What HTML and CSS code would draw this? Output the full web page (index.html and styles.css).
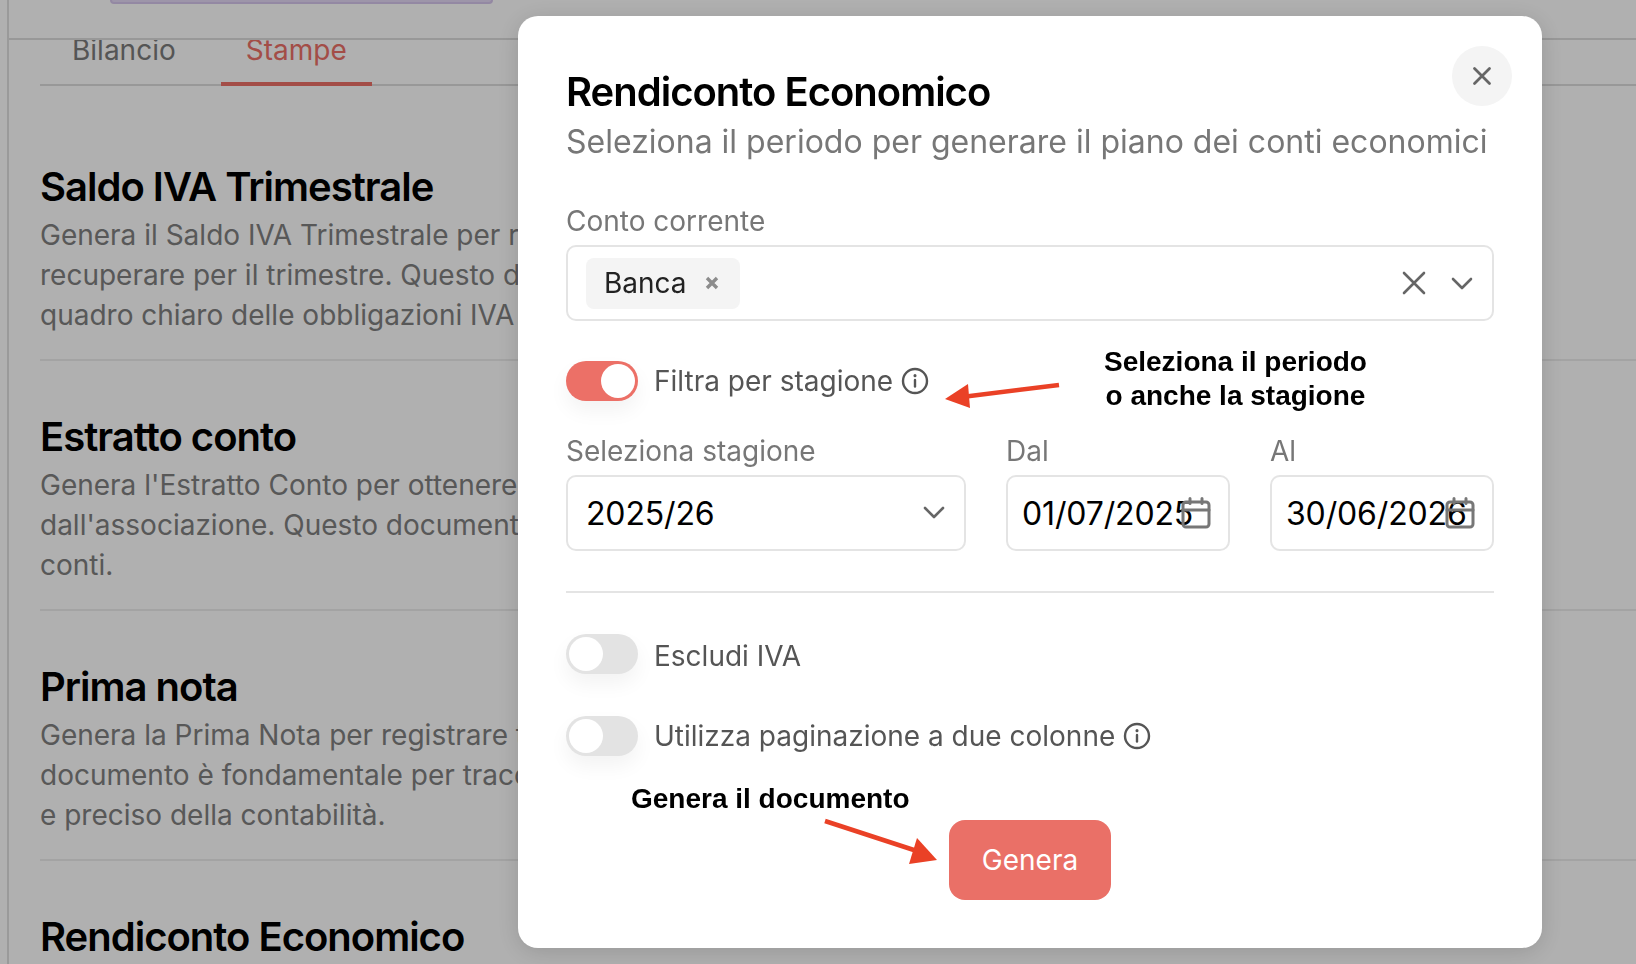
FILE: index.html
```html
<!DOCTYPE html>
<html lang="it">
<head>
    <meta charset="UTF-8">
    <title>Stampe</title>
    <link rel="stylesheet" href="styles.css">
</head>
<body>
<div class="page">
    <div class="topbar">
        <div class="pill"></div>
    </div>
    <div class="content">
        <div class="tabs">
            <div class="tab">Bilancio</div>
            <div class="tab active">Stampe</div>
        </div>
        <div class="item">
            <h2>Saldo IVA Trimestrale</h2>
            <p>Genera il Saldo IVA Trimestrale per riepilogare<br>recuperare per il trimestre. Questo di<br>quadro chiaro delle obbligazioni IVA</p>
        </div>
        <div class="item">
            <h2>Estratto conto</h2>
            <p>Genera l'Estratto Conto per ottenere i<br>dall'associazione. Questo documento<br>conti.</p>
        </div>
        <div class="item">
            <h2>Prima nota</h2>
            <p>Genera la Prima Nota per registrare tutte<br>documento è fondamentale per tracciare<br>e preciso della contabilità.</p>
        </div>
        <div class="item">
            <h2>Rendiconto Economico</h2>
        </div>
    </div>
</div>

<div class="overlay"></div>

<div class="modal">
    <div class="close">
        <svg width="20" height="20" viewBox="0 0 20 20" fill="none" stroke="#666" stroke-width="2.8" stroke-linecap="round"><path d="M2.5 2.5l15 15M17.5 2.5l-15 15"/></svg>
    </div>
    <h1>Rendiconto Economico</h1>
    <div class="subtitle">Seleziona il periodo per generare il piano dei conti economici</div>

    <label class="field-label first">Conto corrente</label>
    <div class="box multi">
        <div class="chip">
            <span>Banca</span>
            <svg width="14" height="14" viewBox="0 0 14 14" fill="none" stroke="#8c8c8c" stroke-width="3.4"><path d="M2 2l10 10M12 2L2 12"/></svg>
        </div>
        <div class="box-icons">
            <svg width="24" height="24" viewBox="0 0 24 24" fill="none" stroke="#666" stroke-width="2.6" stroke-linecap="round"><path d="M2 2l20 20M22 2L2 22"/></svg>
            <svg width="22" height="14" viewBox="0 0 22 14" fill="none" stroke="#666" stroke-width="2.6" stroke-linecap="round" stroke-linejoin="round"><path d="M2 3l9 9 9-9"/></svg>
        </div>
    </div>

    <div class="switch-row season">
        <div class="switch on"><span></span></div>
        <span class="switch-label">Filtra per stagione</span>
        <svg class="info" width="28" height="28" viewBox="0 0 28 28" fill="none" stroke="#555" stroke-width="2.4" stroke-linecap="round"><circle cx="14" cy="14" r="12"/><path d="M14 13v6.5"/><path d="M14 8.6v.2" stroke-width="3"/></svg>
    </div>

    <div class="dates">
        <div>
            <label class="field-label">Seleziona stagione</label>
            <div class="box value">
                <span>2025/26</span>
                <svg class="chevron" width="22" height="14" viewBox="0 0 22 14" fill="none" stroke="#666" stroke-width="2.6" stroke-linecap="round" stroke-linejoin="round"><path d="M2 3l9 9 9-9"/></svg>
            </div>
        </div>
        <div>
            <label class="field-label">Dal</label>
            <div class="box value date">
                <span>01/07/2025</span>
                <svg class="calendar" width="30" height="32" viewBox="0 0 30 32" fill="none" stroke="#777" stroke-width="3" stroke-linejoin="round" stroke-linecap="round"><rect x="2" y="5" width="26" height="25" rx="3"/><path d="M2 13h26M9 1.5v5M21 1.5v5"/></svg>
            </div>
        </div>
        <div>
            <label class="field-label">Al</label>
            <div class="box value date">
                <span>30/06/2026</span>
                <svg class="calendar" width="30" height="32" viewBox="0 0 30 32" fill="none" stroke="#777" stroke-width="3" stroke-linejoin="round" stroke-linecap="round"><rect x="2" y="5" width="26" height="25" rx="3"/><path d="M2 13h26M9 1.5v5M21 1.5v5"/></svg>
            </div>
        </div>
    </div>

    <div class="divider"></div>

    <div class="switch-row exclude">
        <div class="switch"><span></span></div>
        <span class="switch-label">Escludi IVA</span>
    </div>
    <div class="switch-row second">
        <div class="switch"><span></span></div>
        <span class="switch-label">Utilizza paginazione a due colonne</span>
        <svg class="info" width="28" height="28" viewBox="0 0 28 28" fill="none" stroke="#555" stroke-width="2.4" stroke-linecap="round"><circle cx="14" cy="14" r="12"/><path d="M14 13v6.5"/><path d="M14 8.6v.2" stroke-width="3"/></svg>
    </div>

    <div class="actions">
        <div class="btn">Genera</div>
    </div>
</div>

<!-- annotazioni sopra lo screenshot -->
<div class="note note-period">Seleziona il periodo<br>o anche la stagione</div>
<div class="note note-doc">Genera il documento</div>
<svg class="arrows" width="1636" height="964" viewBox="0 0 1636 964">
    <path d="M1059 385L962 397" stroke="#ea4126" stroke-width="4.5" fill="none"/>
    <path d="M945 399L968 384L970 408Z" fill="#ea4126"/>
    <path d="M825 821L920 852" stroke="#ea4126" stroke-width="4.5" fill="none"/>
    <path d="M937 860L917 838L909 864Z" fill="#ea4126"/>
</svg>
</body>
</html>
```

FILE: styles.css
```css
*{margin: 0;padding: 0;box-sizing: border-box;}

html,body{
    height: 100%;
    overflow: hidden;
}
body{
    background: #fff;
    font-family: Inter, "Noto Sans", sans-serif;
}

.page{
    position: relative;
    z-index: 0;
    height: 964px;
    margin-left: 7px;
    border-left: 2px solid #e0e0e0;
    overflow: hidden;
}
.topbar{
    position: relative;
    z-index: 1;
    height: 40px;
    background: #fff;
    border-bottom: 2px solid #dcdcdc;
    padding-left: 101px;
}
.pill{
    width: 383px;
    height: 4px;
    background: #e4d8f5;
    border: 2px solid #d6c6ec;
    border-top: 0;
    border-radius: 0 0 14px 14px;
}
.content{
    padding-left: 31px;
}
.tabs{
    display: flex;
    height: 46px;
    border-bottom: 2px solid #dcdcdc;
    padding-left: 32px;
    gap: 70px;
}
.tab{
    font-size: 28px;
    line-height: 38px;
    margin-top: -9px;
    height: 55px;
    color: #7b7b7b;
}
.tab.active{
    color: #ec7067;
    border-bottom: 4px solid #ec7067;
    padding: 0 25px;
    margin-left: -25px;
    margin-right: -25px;
}

.item{
    height: 250px;
    padding-top: 51px;
    border-bottom: 2px solid #ececec;
}
.tabs + .item{
    height: 275px;
    padding-top: 76px;
}
.item:last-child{
    border-bottom: 0;
}
.item h2{
    font-size: 40px;
    line-height: 50px;
    font-weight: 600;
    color: #000;
    letter-spacing: -1px;
}
.item p{
    margin-top: 3px;
    font-size: 28px;
    line-height: 40px;
    color: #808080;
    white-space: nowrap;
}

.overlay{
    position: fixed;
    z-index: 1;
    top: 0;
    left: 0;
    right: 0;
    bottom: 0;
    background: rgba(0,0,0,.31);
}

.modal{
    position: fixed;
    z-index: 2;
    top: 16px;
    left: 518px;
    width: 1024px;
    height: 932px;
    background: #fff;
    border-radius: 20px;
    padding: 53px 48px 0 48px;
    box-shadow: 0 4px 24px rgba(0,0,0,.15);
}
.close{
    position: absolute;
    top: 30px;
    right: 30px;
    width: 60px;
    height: 60px;
    border-radius: 50%;
    background: #f4f4f4;
    display: flex;
    align-items: center;
    justify-content: center;
}
.modal h1{
    font-size: 40px;
    line-height: 46px;
    font-weight: 600;
    color: #000;
    letter-spacing: -1px;
}
.subtitle{
    margin-top: 7px;
    font-size: 32px;
    line-height: 40px;
    color: #777;
}

.field-label{
    display: block;
    font-size: 28px;
    line-height: 36px;
    color: #777;
    margin-bottom: 6px;
}
.field-label.first{
    margin-top: 41px;
}

.box{
    display: flex;
    align-items: center;
    height: 76px;
    border: 2px solid #e4e4e4;
    border-radius: 10px;
    background: #fff;
}
.multi{
    padding: 0 19px 0 18px;
    justify-content: space-between;
}
.chip{
    display: flex;
    align-items: center;
    gap: 18px;
    height: 51px;
    padding: 0 21px 0 18px;
    background: #f4f4f4;
    border-radius: 8px;
    font-size: 28px;
    color: #222;
}
.box-icons{
    display: flex;
    align-items: center;
    gap: 25px;
}

.switch-row{
    display: flex;
    align-items: center;
    height: 40px;
    font-size: 28px;
    color: #555;
}
.switch-row.season{
    margin-top: 40px;
    margin-bottom: 32px;
}
.switch-row.exclude .switch-label{
    padding-top: 4px;
}
.switch-row.second{
    margin-top: 42px;
}
.switch{
    width: 72px;
    height: 40px;
    border-radius: 20px;
    background: #e3e3e3;
    padding: 3px;
    margin-right: 16px;
    box-shadow: 0 10px 20px rgba(0,0,0,.05);
}
.switch span{
    display: block;
    width: 34px;
    height: 34px;
    border-radius: 50%;
    background: #fff;
}
.switch.on{
    background: #ec7067;
}
.switch.on span{
    margin-left: 32px;
}
.info{
    margin-left: 8px;
}

.dates{
    display: grid;
    grid-template-columns: 400px 224px 224px;
    gap: 40px;
}
.value{
    position: relative;
    padding-left: 18px;
    font-size: 32px;
    letter-spacing: -0.15px;
    color: #000;
}
.date{
    padding-left: 14px;
}
.chevron{
    position: absolute;
    right: 19px;
    top: 28px;
}
.calendar{
    position: absolute;
    right: 17px;
    top: 20px;
}

.divider{
    height: 2px;
    background: #e4e4e4;
    margin: 40px 0 41px;
}

.actions{
    display: flex;
    justify-content: center;
    margin-top: 64px;
}
.btn{
    width: 162px;
    height: 80px;
    line-height: 80px;
    text-align: center;
    border-radius: 16px;
    background: #ea7067;
    color: #fff;
    font-size: 28px;
}

.note{
    position: fixed;
    z-index: 3;
    font-family: "Liberation Sans", Arial, sans-serif;
    font-weight: 700;
    font-size: 28px;
    line-height: 34px;
    color: #000;
    text-align: center;
    white-space: nowrap;
}
.note-period{
    left: 1104px;
    top: 345px;
}
.note-doc{
    left: 631px;
    top: 782px;
}
.arrows{
    position: fixed;
    z-index: 3;
    top: 0;
    left: 0;
    pointer-events: none;
}
```
